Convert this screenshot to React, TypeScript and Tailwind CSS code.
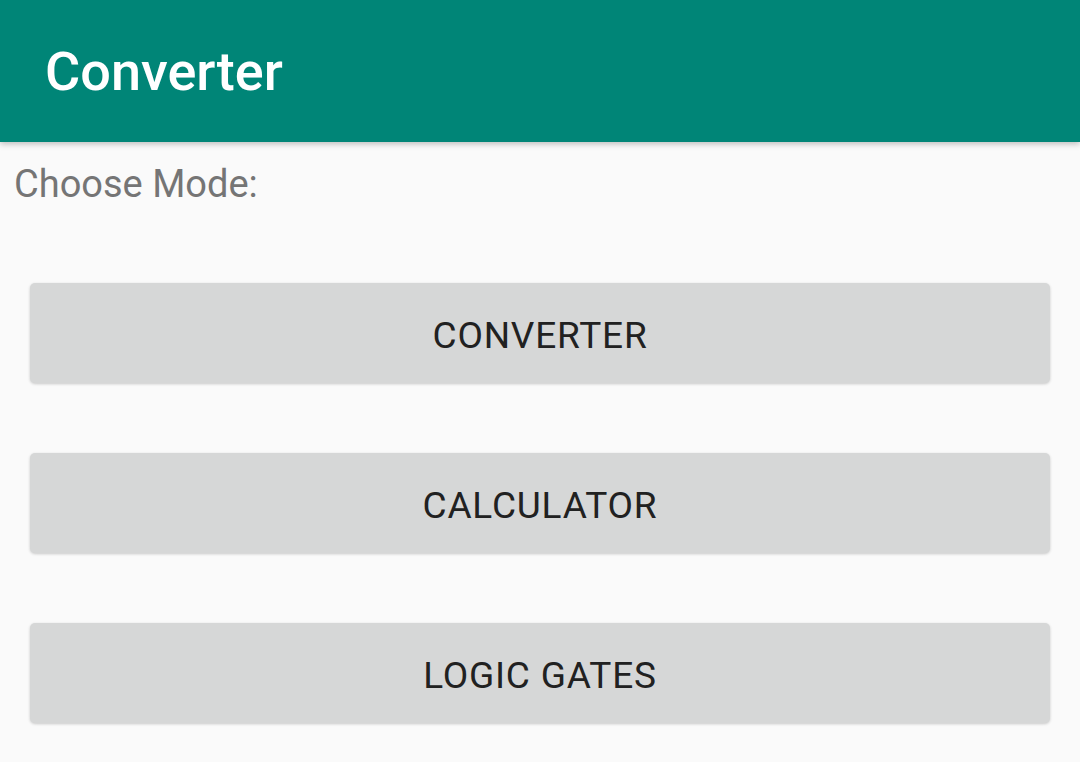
const modes = ['CONVERTER', 'CALCULATOR', 'LOGIC GATES'];

export default function App() {
  return (
    <div
      className="h-[762px] w-[1080px] overflow-hidden bg-[#fafafa]"
      style={{ fontFamily: 'Roboto, "Liberation Sans", sans-serif' }}
    >
      <header className="relative z-10 flex h-[142px] items-center bg-[#008577] pl-[45px] pt-[2px] shadow-[0_2px_6px_rgba(0,0,0,0.25)]">
        <h1 className="text-[54px] font-medium leading-none text-white">Converter</h1>
      </header>

      <div className="pl-[14px] pt-[20px] text-[38px] leading-[44px] text-[#757575]">Choose Mode:</div>

      <div className="flex flex-col gap-[70px] px-[30px] pt-[77px]">
        {modes.map((m) => (
          <button
            key={m}
            className="flex h-[100px] w-[1020px] items-center justify-center rounded-[5px] bg-[#d6d7d7] pt-[5px] text-[37px] tracking-[0.8px] text-[#212121] shadow-[0_1px_3px_rgba(0,0,0,0.2)]"
          >
            {m}
          </button>
        ))}
      </div>
    </div>
  );
}
